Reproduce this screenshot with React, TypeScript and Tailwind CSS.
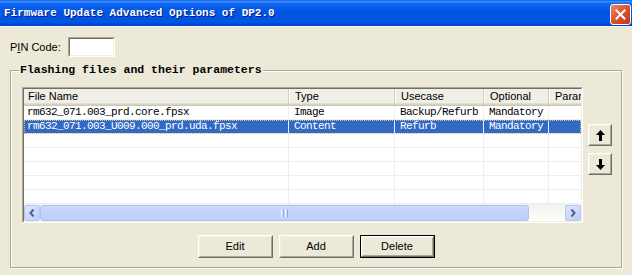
const mono = "font-['Liberation_Mono','DejaVu_Sans_Mono',monospace]";
const sans = "font-['Liberation_Sans','DejaVu_Sans',sans-serif]";

const columns = [
  { name: "File Name", w: "w-[265px]", head: "pl-[4px]", cell: "pl-[3px]" },
  { name: "Type", w: "w-[106px]", head: "pl-[6px]", cell: "pl-[5px]" },
  { name: "Usecase", w: "w-[89px]", head: "pl-[6px]", cell: "pl-[5px]" },
  { name: "Optional", w: "w-[65px]", head: "pl-[6px]", cell: "pl-[5px]" },
  { name: "Parameters", w: "w-[80px]", head: "pl-[6px]", cell: "pl-[5px]" },
];

const rows = [
  ["rm632_071.003_prd.core.fpsx", "Image", "Backup/Refurb", "Mandatory", ""],
  ["rm632_071.003_U009.000_prd.uda.fpsx", "Content", "Refurb", "Mandatory", ""],
  ["", "", "", "", ""],
  ["", "", "", "", ""],
  ["", "", "", "", ""],
  ["", "", "", "", ""],
  ["", "", "", "", ""],
];

function PushButton({ label, isDefault }: { label: string; isDefault?: boolean }) {
  const face = (
    <div className="h-full border border-t-white border-l-white border-r-[#716F64] border-b-[#716F64]">
      <div className="h-full flex items-center justify-center border border-t-[#F1EFE2] border-l-[#F1EFE2] border-r-[#ACA899] border-b-[#ACA899] text-[11px] text-black">
        {label}
      </div>
    </div>
  );
  return (
    <div className={`w-[75px] h-[23px] ${sans} ${isDefault ? "border border-black" : ""}`}>{face}</div>
  );
}

function ArrowButton({ down }: { down?: boolean }) {
  return (
    <div className="w-[24px] h-[22px] border border-t-white border-l-white border-r-[#716F64] border-b-[#716F64]">
      <div className="h-full flex items-center justify-center border border-t-[#F1EFE2] border-l-[#F1EFE2] border-r-[#ACA899] border-b-[#ACA899]">
        <svg width="9" height="11" viewBox="0 0 9 11" className={down ? "rotate-180" : ""}>
          <path d="M4.5 0L9 5H6V11H3V5H0Z" fill="#000" />
        </svg>
      </div>
    </div>
  );
}

function ScrollArrow({ right }: { right?: boolean }) {
  return (
    <div className="w-[16px] h-[16px] mt-px rounded-[2px] border border-[#B4C8F6] bg-[linear-gradient(135deg,#DCE6FE,#BBCEFA)] flex items-center justify-center">
      <svg width="6" height="8" viewBox="0 0 6 8">
        <path d={right ? "M1.5 0.5L4.5 4L1.5 7.5" : "M4.5 0.5L1.5 4L4.5 7.5"} stroke="#4D6185" strokeWidth="2" fill="none" />
      </svg>
    </div>
  );
}

export default function App() {
  return (
    <div className="w-[632px] h-[275px] bg-[#ECE9D8] overflow-hidden">
      {/* Title bar */}
      <div className="h-[26px] flex justify-between bg-[linear-gradient(180deg,#0A5DE8_0%,#3D8EFC_6%,#1065F0_14%,#0055E5_45%,#0054E3_85%,#0045CF_100%)]">
        <div className={`pl-[4px] pt-[6px] text-[11px] leading-[14px] font-bold text-white ${mono} [text-shadow:1px_1px_0_#0A1883]`}>
          Firmware Update Advanced Options of DP2.0
        </div>
        <div className="mt-[4px] mr-[1px] w-[21px] h-[21px] rounded-[3px] border border-white bg-[linear-gradient(135deg,#EF8A66,#DD5630_45%,#C13510)] flex items-center justify-center">
          <svg width="11" height="11" viewBox="0 0 11 11">
            <path d="M1.5 1.5L9.5 9.5M9.5 1.5L1.5 9.5" stroke="#fff" strokeWidth="2" strokeLinecap="square" />
          </svg>
        </div>
      </div>
      <div className="h-px bg-[#F6F4EC]" />

      {/* PIN code */}
      <div className={`flex items-center pl-[10px] pt-[10px] ${sans} text-[11px] text-black`}>
        <span className="w-[58px]">
          P<span className="underline">I</span>N Code:
        </span>
        <div className="w-[47px] h-[20px] border border-t-[#ACA899] border-l-[#ACA899] border-r-white border-b-white">
          <div className="h-full border border-t-[#716F64] border-l-[#716F64] border-r-[#F1EFE2] border-b-[#F1EFE2] bg-white" />
        </div>
      </div>

      {/* Group box */}
      <fieldset className="mx-[10px] mt-[6px] px-[8px] pt-[10px] pb-[9px] border border-[#ACA899] shadow-[inset_1px_1px_0_#fff,1px_1px_0_#fff]">
        <legend className={`px-[1px] bg-[#ECE9D8] text-[11.5px] leading-[14px] font-bold text-black ${mono}`}>
          Flashing files and their parameters
        </legend>

        <div className="flex">
          {/* List view */}
          <div className="ml-[3px] w-[561px] h-[136px] border border-t-[#ACA899] border-l-[#ACA899] border-r-white border-b-white">
            <div className="h-full flex flex-col border border-t-[#716F64] border-l-[#716F64] border-r-[#F1EFE2] border-b-[#F1EFE2] bg-white overflow-hidden">
              {/* header */}
              <div className={`h-[17px] flex shrink-0 bg-[#EFEEE7] shadow-[inset_0_-1px_0_#CBC7B8,inset_0_-2px_0_#D6D2C2,inset_0_-3px_0_#E2DECD] ${sans} text-[11px] text-black`}>
                {columns.map((c) => (
                  <div key={c.name} className={`${c.w} shrink-0 h-[14px] flex items-center ${c.head} border-r border-[#D2CFC0] shadow-[1px_0_0_#fff] whitespace-nowrap overflow-hidden`}>
                    {c.name}
                  </div>
                ))}
              </div>
              {/* rows */}
              {rows.map((r, i) => (
                <div
                  key={i}
                  className={`h-[14px] flex shrink-0 border-b border-[#EEEEEE] ${mono} text-[11px] leading-[13px] tracking-[-0.6px] ${
                    i === 1 ? "bg-[#316AC5] text-white outline outline-dotted outline-[#D9C48A] -outline-offset-1" : "text-black"
                  }`}
                >
                  {r.map((v, j) => (
                    <div key={j} className={`${columns[j].w} shrink-0 ${columns[j].cell} border-r border-[#EEEEEE] whitespace-nowrap overflow-hidden`}>
                      {v}
                    </div>
                  ))}
                </div>
              ))}
              {/* horizontal scrollbar */}
              <div className="h-[17px] shrink-0 flex bg-[linear-gradient(180deg,#F3F1EC,#FEFEFB)]">
                <ScrollArrow />
                <div className="w-[489px] h-[16px] mt-px rounded-[3px] border border-[#B0C4F4] bg-[linear-gradient(180deg,#C9D9FD,#BCCFFB)] flex items-center justify-center">
                  <div className="flex gap-px h-[8px]">
                    <div className="w-px bg-[#EEF4FE]" />
                    <div className="w-px bg-[#8CB0F8]" />
                    <div className="w-px bg-[#EEF4FE]" />
                    <div className="w-px bg-[#8CB0F8]" />
                  </div>
                </div>
                <div className="flex-1" />
                <ScrollArrow right />
              </div>
            </div>
          </div>

          {/* Up / down */}
          <div className="ml-[5px] pt-[37px] flex flex-col gap-[7px]">
            <ArrowButton />
            <ArrowButton down />
          </div>
        </div>

        <div className="mt-[12px] flex justify-center gap-[6px]">
          <PushButton label="Edit" />
          <PushButton label="Add" />
          <PushButton label="Delete" isDefault />
        </div>
      </fieldset>
    </div>
  );
}
